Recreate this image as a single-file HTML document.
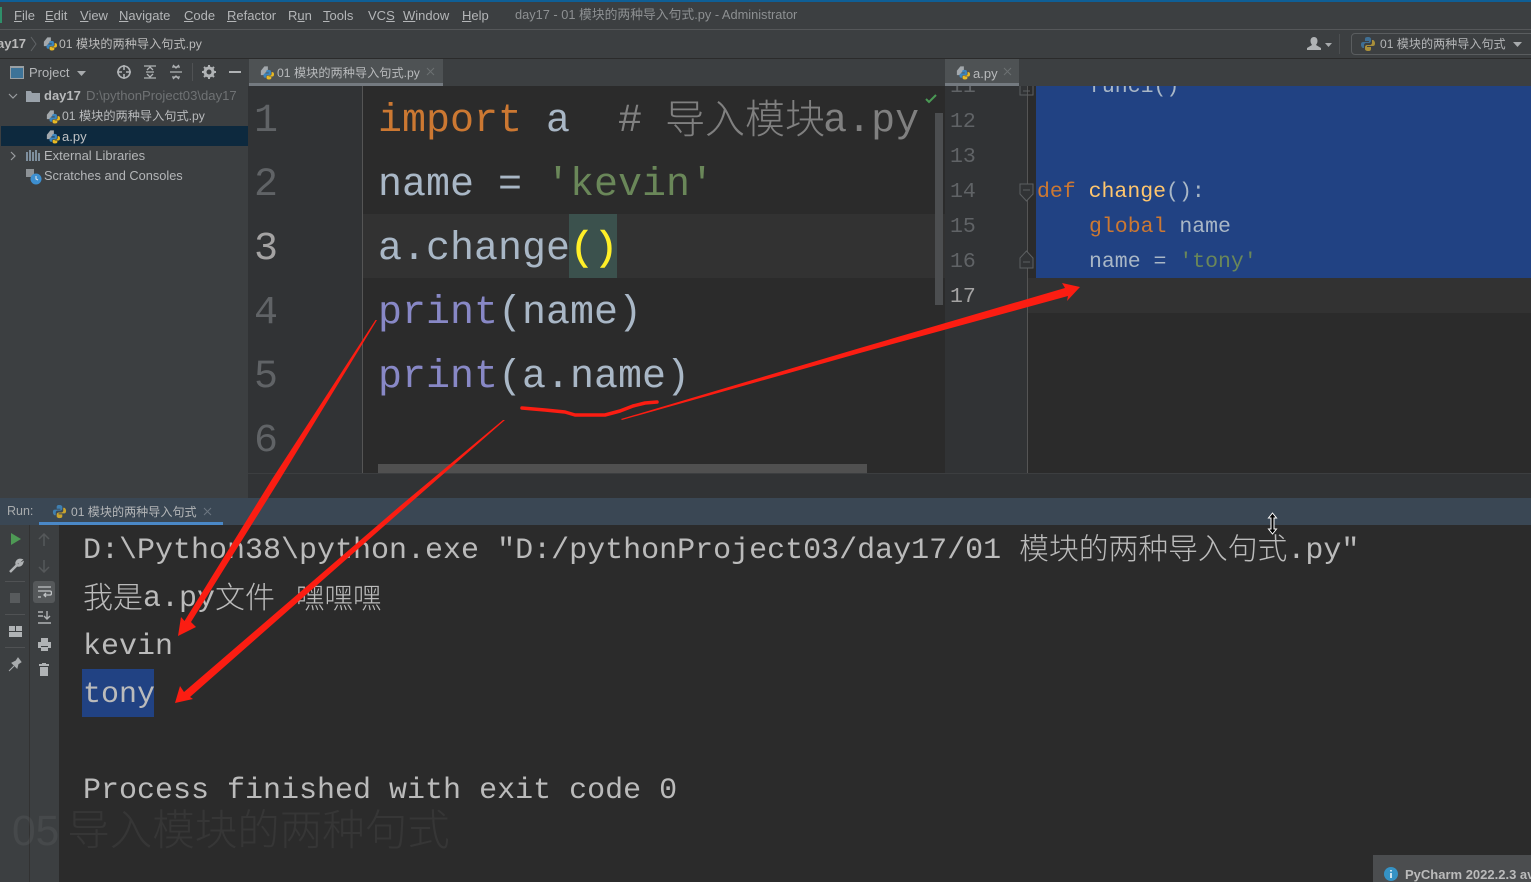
<!DOCTYPE html>
<html><head><meta charset="utf-8">
<style>
html,body{margin:0;padding:0;background:#2b2b2b}
#p{position:relative;width:1531px;height:882px;overflow:hidden;background:#2b2b2b;font-family:"Liberation Sans","Noto Sans CJK SC",sans-serif;color:#bbbbbb}
.a{position:absolute}
.t{position:absolute;white-space:pre;line-height:1}
.m{font-family:"Liberation Mono","Noto Sans CJK SC",monospace}
.c{font-family:"Noto Sans CJK SC",sans-serif;font-weight:300;line-height:0;position:relative}
.u{text-decoration:underline;text-underline-offset:1px}
.ui{font-size:13px;color:#b4b6b8}
</style></head><body><div id="p">
<svg width="0" height="0" style="position:absolute"><defs>
<g id="fi"><path d="M1 6l4-5h4v7H6v3H1z" fill="#a3a8ac"/><path d="M10 5c-2 0-3 .5-3 2v1h3v1H6c-1.500 0-2 1-2 2.500S4.500 14 6 14h1v-1.500C7 11.500 8 11 9 11h2c1 0 1.500-.5 1.500-1.500V7C12.500 5.500 11.500 5 10 5z" fill="#3d85bd"/><path d="M10 16c2 0 3-.5 3-2v-1h-3v-.5h4.500c1 0 1.500-1 1.500-2.500S15.500 7.500 14 7.500h-.8V9.500c0 1-.7 2-1.700 2H9c-1 0-1.500.7-1.500 1.500v1.200C7.500 15.500 8.500 16 10 16z" fill="#e8b923"/></g>
</defs></svg>
<!-- backgrounds -->
<div class="a" style="left:0;top:0;width:1531px;height:2px;background:#0f5f96"></div>
<div class="a" style="left:0;top:2px;width:1531px;height:27px;background:#3c3f41"></div>
<div class="a" style="left:0;top:29px;width:1531px;height:1px;background:#555759"></div>
<div class="a" style="left:0;top:30px;width:1531px;height:28px;background:#3c3f41"></div>
<div class="a" style="left:0;top:58px;width:1531px;height:1px;background:#2b2b2b"></div>
<div class="a" style="left:0;top:59px;width:248px;height:414px;background:#3c3f41"></div>
<div class="a" style="left:248px;top:59px;width:1283px;height:27px;background:#3c3f41"></div>
<div class="a" style="left:1px;top:126px;width:247px;height:20px;background:#0d293e"></div>
<!-- tabs -->
<div class="a" style="left:249px;top:59px;width:194px;height:27px;background:#4e5254"></div>
<div class="a" style="left:249px;top:83px;width:194px;height:3px;background:#747a80"></div>
<div class="a" style="left:945px;top:59px;width:74px;height:27px;background:#4e5254"></div>
<div class="a" style="left:945px;top:83px;width:74px;height:3px;background:#747a80"></div>
<!-- main editor -->
<div class="a" style="left:248px;top:86px;width:115px;height:387px;background:#313335"></div>
<div class="a" style="left:363px;top:86px;width:582px;height:387px;background:#2b2b2b"></div>
<div class="a" style="left:363px;top:214px;width:582px;height:64px;background:#323232"></div>
<div class="a" style="left:362px;top:86px;width:1px;height:387px;background:#555555"></div>
<div class="a" style="left:569px;top:214px;width:48px;height:64px;background:#3b514d"></div>
<div class="a" style="left:935px;top:113px;width:8px;height:192px;background:#4c4e50"></div>
<div class="a" style="left:378px;top:464px;width:489px;height:9px;background:#505050"></div>
<!-- right editor -->
<div class="a" style="left:945px;top:86px;width:83px;height:387px;background:#313335"></div>
<div class="a" style="left:1028px;top:86px;width:503px;height:387px;background:#2b2b2b"></div>
<div class="a" style="left:1028px;top:278px;width:503px;height:35px;background:#323232"></div>
<div class="a" style="left:1027px;top:86px;width:1px;height:387px;background:#555555"></div>
<div class="a" style="left:1036px;top:86px;width:495px;height:192px;background:#214283"></div>
<!-- run panel -->
<div class="a" style="left:0;top:473px;width:248px;height:25px;background:#3c3f41"></div>
<div class="a" style="left:248px;top:473px;width:1283px;height:25px;background:#313335"></div>
<div class="a" style="left:248px;top:473px;width:1283px;height:1px;background:#3c3e40"></div>
<div class="a" style="left:0;top:498px;width:1531px;height:27px;background:#3a4754"></div>
<div class="a" style="left:39px;top:522px;width:184px;height:3px;background:#4a88c7"></div>
<div class="a" style="left:0;top:525px;width:59px;height:357px;background:#3c3f41"></div>
<div class="a" style="left:29px;top:525px;width:1px;height:357px;background:#323232"></div>
<div class="a" style="left:33px;top:581px;width:22px;height:22px;border-radius:3px;background:#55585a"></div>
<div class="a" style="left:82px;top:669px;width:72px;height:48px;background:#214283"></div>
<div class="a" style="left:1373px;top:855px;width:158px;height:27px;background:#4b4d4f"></div>

<!-- menu -->
<div class="a" style="left:0;top:7px;width:2px;height:16px;background:#2f8f6a"></div>
<span class="t ui" style="left:14px;top:9px"><span class="u">F</span>ile</span>
<span class="t ui" style="left:45px;top:9px"><span class="u">E</span>dit</span>
<span class="t ui" style="left:80px;top:9px"><span class="u">V</span>iew</span>
<span class="t ui" style="left:119px;top:9px"><span class="u">N</span>avigate</span>
<span class="t ui" style="left:184px;top:9px"><span class="u">C</span>ode</span>
<span class="t ui" style="left:227px;top:9px"><span class="u">R</span>efactor</span>
<span class="t ui" style="left:288px;top:9px">R<span class="u">u</span>n</span>
<span class="t ui" style="left:323px;top:9px"><span class="u">T</span>ools</span>
<span class="t ui" style="left:368px;top:9px">VC<span class="u">S</span></span>
<span class="t ui" style="left:403px;top:9px"><span class="u">W</span>indow</span>
<span class="t ui" style="left:462px;top:9px"><span class="u">H</span>elp</span>
<span class="t" style="left:515px;top:9px;font-size:12.8px;color:#8d9092">day17 - 01 模块的两种导入句式.py - Administrator</span>

<!-- breadcrumb -->
<span class="t" style="left:-3px;top:37px;font-size:13px;font-weight:bold;color:#bbb">ay17</span>
<svg class="a" style="left:30px;top:35px" width="8" height="18"><path d="M1 2l5 7-5 7" fill="none" stroke="#626568"/></svg>
<svg class="a" style="left:43px;top:36px" width="14" height="15" viewBox="0 0 16 16"><use href="#fi"/></svg>
<span class="t" style="left:59px;top:38px;font-size:12.2px;color:#bbb">01 模块的两种导入句式.py</span>

<!-- top right -->
<svg class="a" style="left:1307px;top:37px" width="26" height="14"><path d="M7 0c2.500 0 3.500 2 3.500 4S9.500 7 9 8l5 3v2H0v-2l5-3C4.500 7 3.500 6 3.500 4S4.500 0 7 0z" fill="#b0b3b5"/><path d="M18 6h7l-3.500 4z" fill="#a8abad"/></svg>
<div class="a" style="left:1339px;top:34px;width:1px;height:20px;background:#4c4f51"></div>
<div class="a" style="left:1351px;top:33px;width:190px;height:20px;border:1px solid #5a5d5f;border-radius:4px"></div>
<svg class="a" style="left:1360px;top:36px" width="16" height="16"><path d="M8 1c-3 0-3 1-3 3v1h4v1H3c-2 0-2 2-2 3s1 3 2 3h1V9c0-1 1-2 2-2h3c1 0 2-1 2-2V3C11 2 10 1 8 1z" fill="#3f6f94"/><path d="M8 15c3 0 3-1 3-3v-1H7v-1h6c2 0 2-2 2-3s-1-3-2-3h-1v3c0 1-1 2-2 2H7c-1 0-2 1-2 2v2c0 1 1 2 3 2z" fill="#a98f3a"/></svg>
<span class="t" style="left:1380px;top:38px;font-size:12.1px;color:#b4b6b8">01 模块的两种导入句式</span>
<svg class="a" style="left:1512px;top:41px" width="12" height="8"><path d="M1 1h9L5.500 6z" fill="#a8abad"/></svg>

<!-- project toolbar -->
<div class="a" style="left:10px;top:66px;width:14px;height:13px;border:1px solid #9aa0a4;box-sizing:border-box;background:#3d7398;border-top-width:2px"></div>
<span class="t ui" style="left:29px;top:66px">Project</span>
<svg class="a" style="left:77px;top:70px" width="10" height="7"><path d="M0 1h9L4.500 6z" fill="#a8abad"/></svg>
<svg class="a" style="left:116px;top:64px" width="16" height="16"><circle cx="8" cy="8" r="6" fill="none" stroke="#b0b3b5" stroke-width="1.600"/><path d="M8 1v5M8 10v5M1 8h5M10 8h5" stroke="#b0b3b5" stroke-width="1.600"/></svg>
<svg class="a" style="left:142px;top:64px" width="16" height="16"><path d="M2 2h12M2 14h12M4 8h8M5 6l3-3 3 3M5 10l3 3 3-3" fill="none" stroke="#b0b3b5" stroke-width="1.300"/></svg>
<svg class="a" style="left:168px;top:64px" width="16" height="16"><path d="M2 8h12M4 13h8M4 3h8M5 1l3 3 3-3M5 15l3-3 3 3" fill="none" stroke="#b0b3b5" stroke-width="1.300"/></svg>
<div class="a" style="left:192px;top:63px;width:1px;height:18px;background:#505254"></div>
<svg class="a" style="left:201px;top:64px" width="16" height="16"><circle cx="8" cy="8" r="4" fill="none" stroke="#b0b3b5" stroke-width="3"/><path d="M8 1v3M8 12v3M1 8h3M12 8h3M3 3l2 2M11 11l2 2M13 3l-2 2M3 13l2-2" stroke="#b0b3b5" stroke-width="2"/></svg>
<div class="a" style="left:229px;top:71px;width:12px;height:2px;background:#b0b3b5"></div>

<!-- tree -->
<svg class="a" style="left:8px;top:91px" width="10" height="10"><path d="M1 3l4 4 4-4" fill="none" stroke="#9a9da0" stroke-width="1.200"/></svg>
<svg class="a" style="left:26px;top:90px" width="15" height="12"><path d="M0 1h5l1 2h8v9H0z" fill="#9aa2aa"/></svg>
<span class="t" style="left:44px;top:89px;font-size:13px;font-weight:bold;color:#b8babc">day17</span>
<span class="t" style="left:86px;top:89px;font-size:13.1px;color:#6f7274">D:\pythonProject03\day17</span>
<svg class="a" style="left:46px;top:109px" width="14" height="15" viewBox="0 0 16 16"><use href="#fi"/></svg>
<span class="t" style="left:62px;top:110px;font-size:12.2px;color:#b8babc">01 模块的两种导入句式.py</span>
<svg class="a" style="left:46px;top:129px" width="14" height="15" viewBox="0 0 16 16"><use href="#fi"/></svg>
<span class="t" style="left:62px;top:130px;font-size:13px;color:#c0c2c4">a.py</span>
<svg class="a" style="left:8px;top:151px" width="10" height="10"><path d="M3 1l4 4-4 4" fill="none" stroke="#9a9da0" stroke-width="1.200"/></svg>
<svg class="a" style="left:26px;top:150px" width="15" height="12"><path d="M1 2v9M4 0v11M7 2v9M10 0v11M13 3v8" stroke="#8fa3b5" stroke-width="1.600"/></svg>
<span class="t" style="left:44px;top:149px;font-size:13px;color:#b4b6b8">External Libraries</span>
<svg class="a" style="left:26px;top:169px" width="16" height="16"><path d="M0 0h8v8H0z" fill="#8d9296"/><circle cx="10" cy="10" r="5.500" fill="#3d8fd0"/><path d="M10 7v3l2 1" stroke="#dfe6ec" fill="none"/></svg>
<span class="t" style="left:44px;top:170px;font-size:12.8px;color:#b4b6b8">Scratches and Consoles</span>

<!-- tabs text -->
<svg class="a" style="left:260px;top:65px" width="14" height="15" viewBox="0 0 16 16"><use href="#fi"/></svg>
<span class="t" style="left:277px;top:67px;font-size:12.2px;color:#b8babc">01 模块的两种导入句式.py</span>
<svg class="a" style="left:426px;top:67px" width="10" height="10"><path d="M1 1l7 7M8 1L1 8" stroke="#6c7072"/></svg>
<svg class="a" style="left:956px;top:65px" width="14" height="15" viewBox="0 0 16 16"><use href="#fi"/></svg>
<span class="t" style="left:973px;top:67px;font-size:13px;color:#b8babc">a.py</span>
<svg class="a" style="left:1003px;top:67px" width="10" height="10"><path d="M1 1l7 7M8 1L1 8" stroke="#6c7072"/></svg>

<!-- main gutter -->
<div class="t m" style="left:254px;top:102px;font-size:40px;color:#606366">1</div>
<div class="t m" style="left:254px;top:166px;font-size:40px;color:#606366">2</div>
<div class="t m" style="left:254px;top:230px;font-size:40px;color:#a4a3a3">3</div>
<div class="t m" style="left:254px;top:294px;font-size:40px;color:#606366">4</div>
<div class="t m" style="left:254px;top:358px;font-size:40px;color:#606366">5</div>
<div class="t m" style="left:254px;top:422px;font-size:40px;color:#606366">6</div>

<!-- main code -->
<div class="t m" style="left:378px;top:102px;font-size:40px;color:#a9b7c6"><span style="color:#cc7832">import</span> a  <span style="color:#808080"># <span class="c" style="top:2px;margin-right:-2px;margin-left:-1px">导入模块</span>a.py</span></div>
<div class="t m" style="left:378px;top:166px;font-size:40px;color:#a9b7c6">name = <span style="color:#6a8759">'kevin'</span></div>
<div class="t m" style="left:378px;top:230px;font-size:40px;color:#a9b7c6">a.change<span style="color:#ffef28;-webkit-text-stroke:.6px #ffef28">()</span></div>
<div class="t m" style="left:378px;top:294px;font-size:40px;color:#a9b7c6"><span style="color:#8888c6">print</span>(name)</div>
<div class="t m" style="left:378px;top:358px;font-size:40px;color:#a9b7c6"><span style="color:#8888c6">print</span>(a.name)</div>
<svg class="a" style="left:925px;top:93px" width="13" height="12"><path d="M1 6l3 3 7-7" fill="none" stroke="#4a9a55" stroke-width="2"/></svg>

<!-- right gutter -->
<div class="a" style="left:945px;top:86px;width:70px;height:10px;overflow:hidden"><span class="t m" style="left:5px;top:-9px;font-size:21.5px;color:#606366">11</span></div>
<div class="t m" style="left:950px;top:112px;font-size:21.5px;color:#606366">12</div>
<div class="t m" style="left:950px;top:147px;font-size:21.5px;color:#606366">13</div>
<div class="t m" style="left:950px;top:182px;font-size:21.5px;color:#606366">14</div>
<div class="t m" style="left:950px;top:217px;font-size:21.5px;color:#606366">15</div>
<div class="t m" style="left:950px;top:252px;font-size:21.5px;color:#606366">16</div>
<div class="t m" style="left:950px;top:287px;font-size:21.5px;color:#a4a3a3">17</div>
<svg class="a" style="left:1019px;top:84px" width="16" height="190"><path d="M1 2v9h13V2M4 7h7" fill="none" stroke="#5c5f61"/><path d="M1 100h13v10l-6.500 7-6.500-7zM4 106h7" fill="#313335" stroke="#5c5f61"/><path d="M1 184v-10l6.500-7 6.500 7v10zM4 178h7" fill="#313335" stroke="#5c5f61"/></svg>

<!-- right code -->
<div class="a" style="left:1036px;top:86px;width:300px;height:11px;overflow:hidden"><span class="t m" style="left:53px;top:-9px;font-size:21.5px;color:#a9b7c6">func1()</span></div>
<div class="t m" style="left:1037px;top:182px;font-size:21.5px;color:#a9b7c6"><span style="color:#cc7832">def</span> <span style="color:#ffc66d">change</span>():</div>
<div class="t m" style="left:1089px;top:217px;font-size:21.5px;color:#a9b7c6"><span style="color:#cc7832">global</span> name</div>
<div class="t m" style="left:1089px;top:252px;font-size:21.5px;color:#a9b7c6">name = <span style="color:#6a8759">'tony'</span></div>

<!-- run header -->
<span class="t" style="left:7px;top:505px;font-size:12.5px;color:#a8abad">Run:</span>
<svg class="a" style="left:52px;top:504px" width="15" height="15" viewBox="0 0 16 16"><path d="M8 1c-3 0-3 1-3 3v1h4v1H3c-2 0-2 2-2 3s1 3 2 3h1V9c0-1 1-2 2-2h3c1 0 2-1 2-2V3C11 2 10 1 8 1z" fill="#3f7fb0"/><path d="M8 15c3 0 3-1 3-3v-1H7v-1h6c2 0 2-2 2-3s-1-3-2-3h-1v3c0 1-1 2-2 2H7c-1 0-2 1-2 2v2c0 1 1 2 3 2z" fill="#c9a42e"/></svg>
<span class="t" style="left:71px;top:506px;font-size:12.1px;color:#b4b6b8">01 模块的两种导入句式</span>
<svg class="a" style="left:203px;top:507px" width="10" height="10"><path d="M1 1l7 7M8 1L1 8" stroke="#6c7680"/></svg>

<!-- run left icons -->
<svg class="a" style="left:10px;top:532px" width="12" height="14"><path d="M1 1l10 6-10 6z" fill="#4e9a55"/></svg>
<svg class="a" style="left:8px;top:558px" width="16" height="16"><path d="M2 14l7-7M9 7a3.500 3.500 0 0 1 4-5l-2 2 1 2 2-1a3.500 3.500 0 0 1-5 2" fill="none" stroke="#b0b3b5" stroke-width="2.500"/></svg>
<div class="a" style="left:5px;top:581px;width:20px;height:1px;background:#505254"></div>
<div class="a" style="left:10px;top:593px;width:10px;height:10px;background:#585b5d"></div>
<div class="a" style="left:5px;top:614px;width:20px;height:1px;background:#505254"></div>
<svg class="a" style="left:9px;top:626px" width="13" height="11"><path d="M0 0h6v5H0zM7 0h6v5H7zM0 6h13v5H0z" fill="#b0b3b5"/></svg>
<div class="a" style="left:5px;top:647px;width:20px;height:1px;background:#505254"></div>
<svg class="a" style="left:8px;top:657px" width="15" height="15"><path d="M1 14l5-5M4 6l5 5 1-4 3-2-3-4-2 3z" fill="#a8abad" stroke="#a8abad"/></svg>
<!-- second column -->
<svg class="a" style="left:38px;top:533px" width="12" height="14"><path d="M6 13V2M1 6l5-5 5 5" fill="none" stroke="#55585a" stroke-width="1.500"/></svg>
<svg class="a" style="left:38px;top:559px" width="12" height="14"><path d="M6 1v11M1 8l5 5 5-5" fill="none" stroke="#55585a" stroke-width="1.500"/></svg>
<svg class="a" style="left:37px;top:586px" width="15" height="13"><path d="M1 1h13M1 5h12c2 0 2 4 0 4H7M9 7L7 9l2 2M1 11h3" fill="none" stroke="#c0c3c5" stroke-width="1.300"/></svg>
<svg class="a" style="left:37px;top:610px" width="15" height="14"><path d="M1 2h5M1 6h5M1 13h13M10 1v8M7 6l3 3 3-3" fill="none" stroke="#b0b3b5" stroke-width="1.400"/></svg>
<svg class="a" style="left:37px;top:637px" width="15" height="15"><path d="M4 1h7v4H4zM1 5h13v6h-3V9H4v2H1zM4 10h7v4H4z" fill="#b0b3b5"/></svg>
<svg class="a" style="left:38px;top:662px" width="12" height="15"><path d="M4 1h4v1h3v2H1V2h3zM2 5h8v9H2z" fill="#b0b3b5"/></svg>

<!-- console -->
<div class="t m" style="left:83px;top:536px;font-size:30px;color:#bbbbbb">D:\Python38\python.exe "D:/pythonProject03/day17/01 <span class="c" style="font-size:29.8px;top:1px">模块的两种导入句式</span>.py"</div>
<div class="t m" style="left:83px;top:584px;font-size:30px;color:#bbbbbb"><span class="c" style="top:2px">我是</span>a.py<span class="c" style="top:2px">文件</span><span class="c" style="top:2px;margin-left:21px;font-size:28.5px">嘿嘿嘿</span></div>
<div class="t m" style="left:83px;top:632px;font-size:30px;color:#bbbbbb">kevin</div>
<div class="t m" style="left:83px;top:680px;font-size:30px;color:#bbbbbb">tony</div>
<div class="t m" style="left:83px;top:776px;font-size:30px;color:#bbbbbb">Process finished with exit code 0</div>
<div class="t" style="left:12px;top:811px;font-size:42.5px;color:rgba(255,255,255,.055);font-weight:300;font-family:'Liberation Sans','Noto Sans CJK SC',sans-serif">05<span style="margin-left:8px">导入模块的两种句式</span></div>

<!-- notification -->
<svg class="a" style="left:1384px;top:867px" width="14" height="14"><circle cx="7" cy="7" r="7" fill="#3592c4"/><path d="M7 3v1.500M7 6v5" stroke="#fff" stroke-width="1.500"/></svg>
<span class="t" style="left:1405px;top:868px;font-size:13px;font-weight:bold;color:#bbb">PyCharm 2022.2.3 av</span>

<!-- resize cursor -->
<svg class="a" style="left:1267px;top:512px" width="11" height="23"><path d="M5.500 1l4 5H7v11h2.500l-4 5-4-5H4V6H1.500z" fill="#000" stroke="#fff"/></svg>

<!-- red annotations -->
<svg class="a" style="left:0;top:0" width="1531" height="882">
<path d="M377 320L279.500 480 191 622 196 627 178 636 181 617 184.500 621 271.500 480 375.500 320z" fill="#fb1d12"/>
<path d="M505 420L400 512 190 697 193 699 175 703 180 686 184 692 400 506 503 420z" fill="#fb1d12"/>
<path d="M621 419L860 348 1065 288 1062 283 1080 287 1067 301 1068 296 860 353 622 420z" fill="#fb1d12"/>
<path d="M522 408L545 410 565 412 575 415 605 415 620 411 633 406 645 403 657 402" fill="none" stroke="#fb1d12" stroke-width="3.500" stroke-linecap="round" stroke-linejoin="round"/>
</svg>
</div></body></html>
